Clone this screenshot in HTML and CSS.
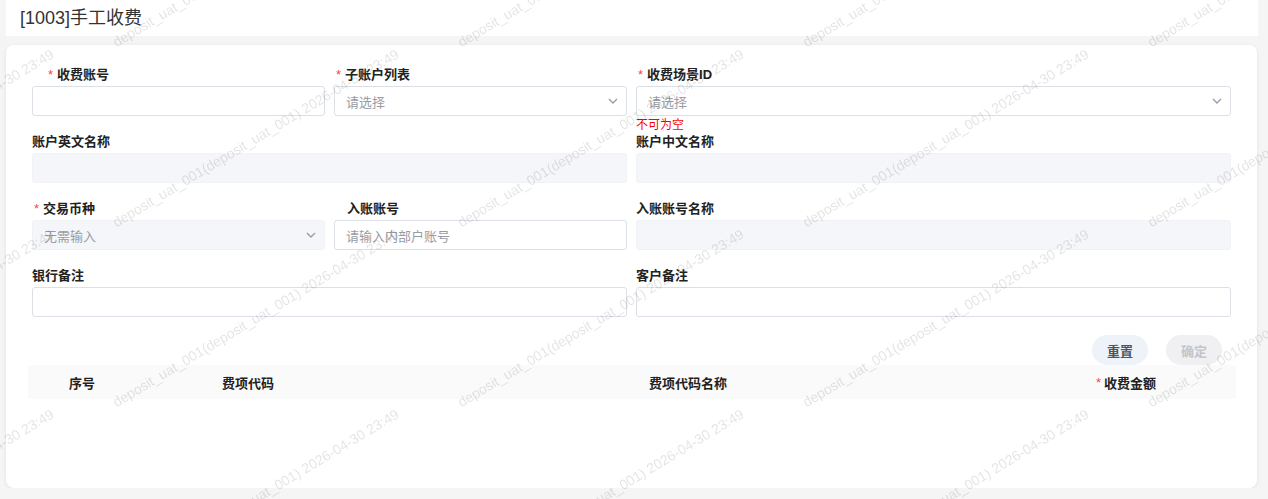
FILE: index.html
```html
<!DOCTYPE html>
<html lang="zh-CN">
<head>
    <meta charset="UTF-8">
    <meta name="viewport" content="width=device-width, initial-scale=1.0">
    <title>手工收费</title>
    <link rel="stylesheet" href="styles.css">
</head>
<body>

    <!-- Page header -->
    <div class="page-header">
        <h1 class="page-title">[1003]手工收费</h1>
    </div>

    <!-- Form card -->
    <div class="card">
        <form class="fee-form">
            <div class="form-item">
                <label class="form-label indent-lg"><span class="req">*</span>收费账号</label>
                <div class="control"></div>
            </div>
            <div class="form-item">
                <label class="form-label"><span class="req">*</span>子账户列表</label>
                <div class="control">
                    <span class="placeholder">请选择</span>
                    <svg class="arrow" width="10" height="6" viewBox="0 0 10 6"><path d="M1 1l4 4 4-4" fill="none" stroke="#9a9da5" stroke-width="1.4"/></svg>
                </div>
            </div>
            <div class="form-item span-2">
                <label class="form-label"><span class="req">*</span>收费场景ID</label>
                <div class="control">
                    <span class="placeholder">请选择</span>
                    <svg class="arrow" width="10" height="6" viewBox="0 0 10 6"><path d="M1 1l4 4 4-4" fill="none" stroke="#9a9da5" stroke-width="1.4"/></svg>
                </div>
                <div class="form-error">不可为空</div>
            </div>

            <div class="form-item span-2">
                <label class="form-label">账户英文名称</label>
                <div class="control disabled"></div>
            </div>
            <div class="form-item span-2">
                <label class="form-label">账户中文名称</label>
                <div class="control disabled"></div>
            </div>

            <div class="form-item">
                <label class="form-label"><span class="req">*</span>交易币种</label>
                <div class="control disabled">
                    <span class="placeholder">无需输入</span>
                    <svg class="arrow" width="10" height="6" viewBox="0 0 10 6"><path d="M1 1l4 4 4-4" fill="none" stroke="#9a9da5" stroke-width="1.4"/></svg>
                </div>
            </div>
            <div class="form-item">
                <label class="form-label indent-sm">入账账号</label>
                <div class="control">
                    <span class="placeholder">请输入内部户账号</span>
                </div>
            </div>
            <div class="form-item span-2">
                <label class="form-label">入账账号名称</label>
                <div class="control disabled"></div>
            </div>

            <div class="form-item span-2">
                <label class="form-label">银行备注</label>
                <div class="control"></div>
            </div>
            <div class="form-item span-2">
                <label class="form-label">客户备注</label>
                <div class="control"></div>
            </div>
        </form>

        <div class="actions">
            <button type="button" class="btn btn-reset">重置</button>
            <button type="button" class="btn btn-confirm" disabled>确定</button>
        </div>

        <div class="fee-table">
            <div class="th">序号</div>
            <div class="th">费项代码</div>
            <div class="th">费项代码名称</div>
            <div class="th"><span class="req">*</span>收费金额</div>
        </div>
    </div>

    <!-- Watermark overlay -->
    <div class="watermark">
        <div class="wm-cell"><span>deposit_uat_001(deposit_uat_001) 2026-04-30 23:49</span></div>
        <div class="wm-cell"><span>deposit_uat_001(deposit_uat_001) 2026-04-30 23:49</span></div>
        <div class="wm-cell"><span>deposit_uat_001(deposit_uat_001) 2026-04-30 23:49</span></div>
        <div class="wm-cell"><span>deposit_uat_001(deposit_uat_001) 2026-04-30 23:49</span></div>
        <div class="wm-cell"><span>deposit_uat_001(deposit_uat_001) 2026-04-30 23:49</span></div>
        <div class="wm-cell"><span>deposit_uat_001(deposit_uat_001) 2026-04-30 23:49</span></div>
        <div class="wm-cell"><span>deposit_uat_001(deposit_uat_001) 2026-04-30 23:49</span></div>
        <div class="wm-cell"><span>deposit_uat_001(deposit_uat_001) 2026-04-30 23:49</span></div>
        <div class="wm-cell"><span>deposit_uat_001(deposit_uat_001) 2026-04-30 23:49</span></div>
        <div class="wm-cell"><span>deposit_uat_001(deposit_uat_001) 2026-04-30 23:49</span></div>
        <div class="wm-cell"><span>deposit_uat_001(deposit_uat_001) 2026-04-30 23:49</span></div>
        <div class="wm-cell"><span>deposit_uat_001(deposit_uat_001) 2026-04-30 23:49</span></div>
        <div class="wm-cell"><span>deposit_uat_001(deposit_uat_001) 2026-04-30 23:49</span></div>
        <div class="wm-cell"><span>deposit_uat_001(deposit_uat_001) 2026-04-30 23:49</span></div>
        <div class="wm-cell"><span>deposit_uat_001(deposit_uat_001) 2026-04-30 23:49</span></div>
        <div class="wm-cell"><span>deposit_uat_001(deposit_uat_001) 2026-04-30 23:49</span></div>
        <div class="wm-cell"><span>deposit_uat_001(deposit_uat_001) 2026-04-30 23:49</span></div>
        <div class="wm-cell"><span>deposit_uat_001(deposit_uat_001) 2026-04-30 23:49</span></div>
        <div class="wm-cell"><span>deposit_uat_001(deposit_uat_001) 2026-04-30 23:49</span></div>
        <div class="wm-cell"><span>deposit_uat_001(deposit_uat_001) 2026-04-30 23:49</span></div>
        <div class="wm-cell"><span>deposit_uat_001(deposit_uat_001) 2026-04-30 23:49</span></div>
        <div class="wm-cell"><span>deposit_uat_001(deposit_uat_001) 2026-04-30 23:49</span></div>
        <div class="wm-cell"><span>deposit_uat_001(deposit_uat_001) 2026-04-30 23:49</span></div>
        <div class="wm-cell"><span>deposit_uat_001(deposit_uat_001) 2026-04-30 23:49</span></div>
        <div class="wm-cell"><span>deposit_uat_001(deposit_uat_001) 2026-04-30 23:49</span></div>
        <div class="wm-cell"><span>deposit_uat_001(deposit_uat_001) 2026-04-30 23:49</span></div>
        <div class="wm-cell"><span>deposit_uat_001(deposit_uat_001) 2026-04-30 23:49</span></div>
        <div class="wm-cell"><span>deposit_uat_001(deposit_uat_001) 2026-04-30 23:49</span></div>
        <div class="wm-cell"><span>deposit_uat_001(deposit_uat_001) 2026-04-30 23:49</span></div>
        <div class="wm-cell"><span>deposit_uat_001(deposit_uat_001) 2026-04-30 23:49</span></div>
    </div>

</body>
</html>
```

FILE: styles.css
```css
body {
    margin: 0;
    background-color: #f5f5f6;
    font-family: "Liberation Sans", "Noto Sans CJK SC", sans-serif;
    color: #303133;
    overflow: hidden;
}
.page-header {
    height: 36px;
    margin: 0 10px 0 6px;
    background-color: #fff;
    display: flex;
    align-items: center;
}
.page-title {
    margin: 0 0 0 14px;
    font-size: 18px;
    font-weight: normal;
    color: #333;
    line-height: 24px;
}
.card {
    margin: 9px 11px 0 6px;
    height: 443px;
    box-sizing: border-box;
    padding: 19px 26px 0 26px;
    background-color: #fff;
    border-radius: 8px;
    box-shadow: 0 1px 4px rgba(0, 0, 0, 0.08);
}
.fee-form {
    display: grid;
    grid-template-columns: repeat(4, 1fr);
    column-gap: 9px;
    row-gap: 15px;
}
.form-item {
    position: relative;
}
.span-2 {
    grid-column: span 2;
}
.form-label {
    display: block;
    height: 20px;
    line-height: 21px;
    margin-bottom: 2px;
    font-size: 13px;
    font-weight: bold;
    color: #222;
}
.indent-lg {
    padding-left: 14px;
}
.indent-sm {
    padding-left: 13px;
}
.req {
    color: #f04a4a;
    font-weight: normal;
    margin: 0 4px 0 2px;
}
.control {
    height: 30px;
    box-sizing: border-box;
    border: 1px solid #dcdfe6;
    border-radius: 3px;
    padding: 0 8px 0 11px;
    display: flex;
    align-items: center;
    justify-content: space-between;
    background-color: #fff;
}
.control.disabled {
    background-color: #f4f6f9;
    border-color: #f0f2f5;
}
.placeholder {
    font-size: 13px;
    color: #999ca4;
}
.arrow {
    display: block;
}
.form-error {
    position: absolute;
    top: 100%;
    left: 0;
    font-size: 12px;
    line-height: 16px;
    color: #f00;
    margin-top: 1px;
}
.actions {
    display: flex;
    justify-content: flex-end;
    gap: 18px;
    margin: 18px 9px 0 0;
}
.btn {
    width: 56px;
    height: 30px;
    border: none;
    border-radius: 15px;
    font-family: inherit;
    font-size: 13px;
    font-weight: bold;
    padding: 0;
}
.btn-reset {
    background-color: #eef3f9;
    color: #50545c;
    cursor: pointer;
}
.btn-confirm {
    background-color: #f0f0f2;
    color: #c3c5cb;
}
.fee-table {
    display: grid;
    grid-template-columns: 108px 224px 1fr 220px;
    height: 34px;
    margin: 0 -5px 0 -4px;
    background-color: #fafafa;
}
.th {
    display: flex;
    align-items: center;
    justify-content: center;
    font-size: 13px;
    font-weight: bold;
    color: #222;
}
.th .req {
    margin: 0 3px 0 0;
}
.watermark {
    position: fixed;
    left: -227px;
    top: -130px;
    display: grid;
    grid-template-columns: repeat(6, 345px);
    grid-auto-rows: 180px;
    pointer-events: none;
    z-index: 10;
}
.wm-cell {
    display: flex;
    align-items: flex-end;
}
.wm-cell span {
    white-space: nowrap;
    font-family: "Liberation Sans", sans-serif;
    font-size: 14px;
    line-height: 16px;
    color: rgba(0, 0, 0, 0.11);
    transform-origin: 0 100%;
    transform: rotate(-31deg);
}
```
